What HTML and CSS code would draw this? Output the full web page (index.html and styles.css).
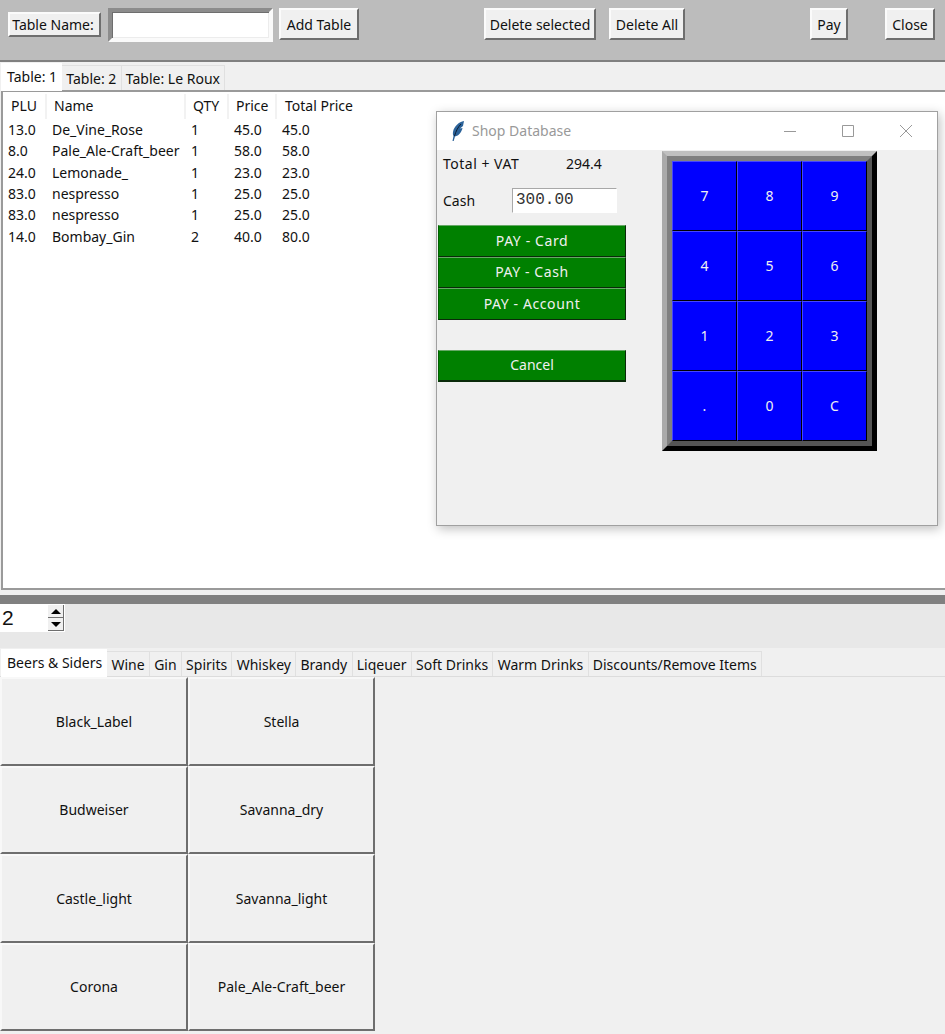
FILE: index.html
```html
<!doctype html>
<html>
<head>
<meta charset="utf-8">
<title>Shop</title>
<link rel="stylesheet" href="styles.css">
</head>
<body>
	<div class="toolbar">
		<button class="btn btn-label">Table Name:</button>
		<input class="name-entry" type="text">
		<button class="btn btn-add">Add Table</button>
		<button class="btn btn-del">Delete selected</button>
		<button class="btn btn-delall">Delete All</button>
		<button class="btn btn-pay">Pay</button>
		<button class="btn btn-close">Close</button>
	</div>

	<div class="tabs order-tabs">
		<div class="tab active">Table: 1</div>
		<div class="tab">Table: 2</div>
		<div class="tab">Table: Le Roux</div>
	</div>

	<div class="order">
		<div class="row head">
			<div>PLU</div><div>Name</div><div>QTY</div><div>Price</div><div>Total Price</div>
		</div>
		<div class="row"><div>13.0</div><div>De_Vine_Rose</div><div>1</div><div>45.0</div><div>45.0</div></div>
		<div class="row"><div>8.0</div><div>Pale_Ale-Craft_beer</div><div>1</div><div>58.0</div><div>58.0</div></div>
		<div class="row"><div>24.0</div><div>Lemonade_</div><div>1</div><div>23.0</div><div>23.0</div></div>
		<div class="row"><div>83.0</div><div>nespresso</div><div>1</div><div>25.0</div><div>25.0</div></div>
		<div class="row"><div>83.0</div><div>nespresso</div><div>1</div><div>25.0</div><div>25.0</div></div>
		<div class="row"><div>14.0</div><div>Bombay_Gin</div><div>2</div><div>40.0</div><div>80.0</div></div>
	</div>

	<div class="sash"></div>

	<div class="qty-bar">
		<div class="spin">
			<span class="spin-val">2</span>
			<div class="spin-btns">
				<div class="spin-btn"><i class="arrow up"></i></div>
				<div class="spin-btn"><i class="arrow down"></i></div>
			</div>
		</div>
	</div>

	<div class="tabs menu-tabs">
		<div class="tab active">Beers &amp; Siders</div>
		<div class="tab">Wine</div>
		<div class="tab">Gin</div>
		<div class="tab">Spirits</div>
		<div class="tab">Whiskey</div>
		<div class="tab">Brandy</div>
		<div class="tab">Liqeuer</div>
		<div class="tab">Soft Drinks</div>
		<div class="tab">Warm Drinks</div>
		<div class="tab">Discounts/Remove Items</div>
	</div>

	<div class="items">
		<button class="item">Black_Label</button>
		<button class="item">Stella</button>
		<button class="item">Budweiser</button>
		<button class="item">Savanna_dry</button>
		<button class="item">Castle_light</button>
		<button class="item">Savanna_light</button>
		<button class="item">Corona</button>
		<button class="item">Pale_Ale-Craft_beer</button>
	</div>

	<!-- pay window sits over the order list -->
	<div class="win">
		<div class="titlebar">
			<svg class="feather" width="14" height="22" viewBox="0 0 14 22">
				<path d="M13 1C8 2 3 6 2 12c-.3 2 0 3 .5 4L1.500 21h1.200l1.300-4.500C8 16 11 11 11.500 8L9 8.500 12 6z" fill="#2b6299"/>
				<path d="M10 4C7 7 5 11 3.500 16" stroke="#0b1c30" stroke-width="1" fill="none"/>
			</svg>
			<span class="wintitle">Shop Database</span>
			<div class="winctl">
				<svg width="14" height="14" viewBox="0 0 14 14"><path d="M1 7.500h12" stroke="#999" fill="none"/></svg>
				<svg width="14" height="14" viewBox="0 0 14 14"><path d="M1.500 1.500h11v11h-11z" stroke="#999" fill="none"/></svg>
				<svg width="14" height="14" viewBox="0 0 14 14"><path d="M1 1l12 12M13 1L1 13" stroke="#999" fill="none"/></svg>
			</div>
		</div>
		<div class="winbody">
			<div class="pay-col">
				<div class="total"><span class="total-lbl">Total + VAT</span><span>294.4</span></div>
				<div class="cash"><span class="cash-lbl">Cash</span><input class="cash-entry" type="text" value="300.00"></div>
				<div class="pay-btns">
					<button class="gbtn">PAY - Card</button>
					<button class="gbtn">PAY - Cash</button>
					<button class="gbtn">PAY - Account</button>
				</div>
				<button class="gbtn cancel">Cancel</button>
			</div>
			<div class="pad-outer">
				<div class="pad">
					<button class="key">7</button><button class="key">8</button><button class="key">9</button>
					<button class="key">4</button><button class="key">5</button><button class="key">6</button>
					<button class="key">1</button><button class="key">2</button><button class="key">3</button>
					<button class="key">.</button><button class="key">0</button><button class="key">C</button>
				</div>
			</div>
		</div>
	</div>
</body>
</html>
```

FILE: styles.css
```css
*{
	margin:0;
	padding:0;
	box-sizing:border-box;
}
body{
	width:945px;
	height:1034px;
	overflow:hidden;
	position:relative;
	background:#f0f0f0;
	font-family:"Noto Sans","Open Sans",sans-serif;
	font-size:14px;
	color:#111;
}
button,input{
	font:inherit;
	color:inherit;
	outline:none;
}

/* top bar */
.toolbar{
	height:62px;
	background:#bcbcbc;
	border-bottom:2px solid #808080;
	display:flex;
	align-items:flex-start;
	padding:8px 0 0 8px;
}
.btn{
	height:32px;
	background:#f0f0f0;
	border:2px solid;
	border-color:#fbfbfb #6e6e6e #6e6e6e #fbfbfb;
}
.btn-label{width:93px;height:25px;margin-top:4px;padding-right:3px;}
.name-entry{
	width:165px;
	height:34px;
	margin-left:7px;
	background:#fff;
	border:4px solid;
	border-color:#8c8c8c #fafafa #fafafa #8c8c8c;
	box-shadow:inset 1px 1px 0 #6e6e6e,inset -1px -1px 0 #ececec;
}
.btn-add{width:80px;margin-left:6px;}
.btn-del{width:112px;margin-left:125px;}
.btn-delall{width:76px;margin-left:13px;}
.btn-pay{width:38px;margin-left:125px;}
.btn-close{width:50px;margin-left:37px;}

/* notebook tabs */
.tabs{
	display:flex;
	align-items:flex-end;
	padding-left:1px;
}
.order-tabs{height:28px;}
.menu-tabs{height:29px;border-bottom:1px solid #dcdcdc;}
.tab{
	height:25px;
	padding:0 4.25px;
	line-height:26px;
	white-space:nowrap;
	background:#f0f0f0;
	border:1px solid #e0e0e0;
	border-bottom:none;
	margin-left:-1px;
}
.tab:first-child{margin-left:0;}
.tab.active{
	height:28px;
	padding:0 4px 3px 5px;
	line-height:25px;
	background:#fff;
	border-color:#fff;
	margin-bottom:-1px;
	position:relative;
	z-index:1;
}

/* order list */
.order{
	height:500px;
	margin-left:1px;
	padding:2px 0 0 1px;
	background:#fff;
	border-top:2px solid #9a9a9a;
	border-left:2px solid #9a9a9a;
	border-bottom:2px solid #9a9a9a;
}
.row{
	display:grid;
	grid-template-columns:43px 139px 43px 48px 1fr;
	height:21.33px;
	line-height:21px;
}
.row>div{padding-left:5px;white-space:nowrap;}
.row>div:first-child{padding-left:4px;}
.row.head{height:25px;line-height:24px;}
.row.head>div{padding-left:7px;border-right:2px solid #f2f2f2;}
.row.head>div:last-child{padding-left:8px;border-right:none;}

.sash{
	height:14px;
	background:#f0f0f0;
	border-bottom:9px solid #808080;
}

/* qty spinner */
.qty-bar{
	height:44px;
	background:#e8e8e8;
}
.spin{
	width:65px;
	height:28px;
	background:#fff;
	display:flex;
	justify-content:space-between;
	padding:1px;
}
.spin-val{
	font-family:"Liberation Sans",sans-serif;
	font-size:21px;
	line-height:26px;
	padding-left:1px;
}
.spin-btns{width:16px;display:flex;flex-direction:column;}
.spin-btn{
	flex:1;
	display:flex;
	align-items:center;
	justify-content:center;
	background:#f0f0f0;
	border-bottom:1px solid #6e6e6e;
	border-right:1px solid #6e6e6e;
}
.arrow{
	width:0;
	height:0;
	border-left:5px solid transparent;
	border-right:5px solid transparent;
}
.arrow.up{border-bottom:5px solid #000;}
.arrow.down{border-top:5px solid #000;}

/* drinks */
.items{
	display:grid;
	grid-template-columns:188px 187px;
	grid-auto-rows:88.5px;
}
.item{
	background:#f0f0f0;
	border:2px solid;
	border-color:#f8f8f8 #6e6e6e #6e6e6e #f8f8f8;
}

/* pay window */
.win{
	position:absolute;
	left:436px;
	top:111px;
	width:502px;
	height:415px;
	background:#f0f0f0;
	border:1px solid #a0a0a0;
	box-shadow:2px 3px 10px rgba(0,0,0,.25);
}
.titlebar{
	height:38px;
	padding-bottom:1px;
	background:#fff;
	display:flex;
	align-items:center;
	padding-left:14px;
}
.feather{flex:none;}
.wintitle{margin-left:7px;color:#999;}
.winctl{
	margin-left:auto;
	margin-right:24px;
	display:flex;
	gap:44px;
}
.winbody{
	display:flex;
	align-items:flex-start;
	padding:1px 0 0 1px;
}
.pay-col{width:224px;}
.total{
	display:flex;
	height:26px;
	line-height:26px;
	padding-left:5px;
}
.total-lbl{width:123px;letter-spacing:.5px;}
.cash{
	display:flex;
	align-items:center;
	height:26px;
	margin-top:10px;
	padding-left:5px;
}
.cash-lbl{width:69px;}
.cash-entry{
	width:105px;
	height:25px;
	padding-left:3px;
	background:#fff;
	border:1px solid;
	border-color:#a8a8a8 #fff #fff #a8a8a8;
	font-family:"Liberation Mono",monospace;
	font-size:16px;
	color:#333;
}
.pay-btns{
	display:flex;
	flex-direction:column;
	margin-top:12px;
	width:188px;
}
.gbtn{
	display:block;
	width:188px;
	height:31.5px;
	padding-bottom:1px;
	background:#008000;
	color:#f0f0f0;
	border:1px solid;
	border-color:#66a866 #0a2a0a #0a2a0a #006000;
}
.pay-btns .gbtn{letter-spacing:.6px;}
.cancel{height:32px;margin-top:30px;border-bottom-width:2px;}
.pad-outer{
	width:215px;
	height:300px;
	border:5px solid;
	border-color:#c0c0c0 #000 #000 #aaa;
}
.pad{
	height:100%;
	display:grid;
	grid-template-columns:repeat(3,1fr);
	grid-template-rows:repeat(4,1fr);
	background:#00f;
	border:5px solid;
	border-color:#808080 #555 #555 #808080;
}
.key{
	padding-bottom:2px;
	background:#00f;
	color:#f0f0f0;
	border:1px solid;
	border-color:#4646ff #000 #000 #4646ff;
}
```
